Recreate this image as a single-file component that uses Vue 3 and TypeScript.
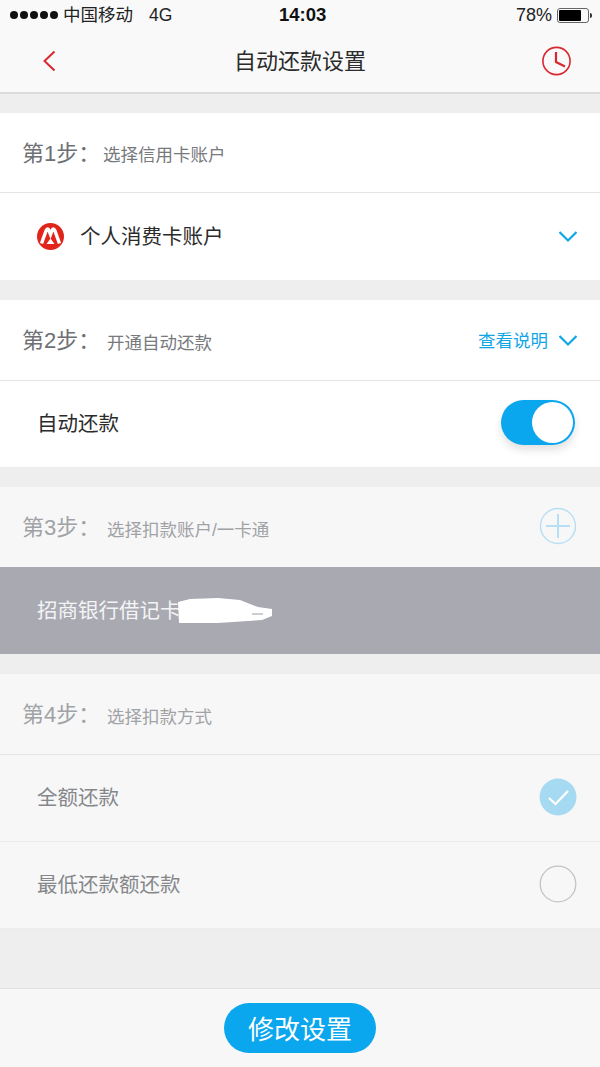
<template>
  <div class="page">
    <header class="top">
      <div class="status">
        <div class="status-left">
          <span class="dots"><i v-for="n in 5" :key="n"></i></span>
          <span class="carrier">中国移动</span>
          <span class="net">4G</span>
        </div>
        <span class="clock">14:03</span>
        <div class="status-right">
          <span class="pct">78%</span>
          <span class="battery"><b></b></span>
          <span class="nub"></span>
        </div>
      </div>
      <div class="nav">
        <svg class="nav-back" width="14" height="22" viewBox="0 0 14 22">
          <path d="M11.5 1.5 L1.5 11 L11.5 20.5" fill="none" stroke="#d9282f" stroke-width="2" />
        </svg>
        <h1>自动还款设置</h1>
        <svg class="nav-clock" width="30" height="30" viewBox="0 0 30 30">
          <circle cx="15.5" cy="15" r="13.6" fill="none" stroke="#d9282f" stroke-width="1.6" />
          <path d="M15 6 V16 L24 20.5" fill="none" stroke="#d9282f" stroke-width="2.2" />
        </svg>
      </div>
    </header>

    <section class="card">
      <div class="step">
        <span class="step-no">第1步：</span>
        <span class="step-text first">选择信用卡账户</span>
      </div>
      <div class="row account">
        <svg class="logo" width="27" height="27" viewBox="0 0 27 27">
          <circle cx="13.5" cy="13.5" r="13.5" fill="#e1251b" />
          <path d="M4.5 20.5 L9.2 7.5 Q10.5 4.5 12 7.5 L13.5 11.5 L15 7.5 Q16.5 4.5 17.8 7.5 L22.5 20.5" fill="none" stroke="#fff" stroke-width="3.4" />
          <path d="M9.5 21 L13.5 15.5 L17.5 21 Z" fill="#fff" />
        </svg>
        <span class="label dark">个人消费卡账户</span>
        <svg class="chev" width="20" height="13" viewBox="0 0 20 13">
          <path d="M1.5 2 L10 10.5 L18.5 2" fill="none" stroke="#12a5e6" stroke-width="2.2" />
        </svg>
      </div>
    </section>

    <section class="card wide-head">
      <div class="step">
        <span class="step-no">第2步：</span>
        <span class="step-text">开通自动还款</span>
        <span class="more">查看说明</span>
        <svg class="chev" width="20" height="13" viewBox="0 0 20 13">
          <path d="M1.5 2 L10 10.5 L18.5 2" fill="none" stroke="#12a5e6" stroke-width="2.2" />
        </svg>
      </div>
      <div class="row">
        <span class="label dark">自动还款</span>
        <span class="switch"><i></i></span>
      </div>
    </section>

    <section class="card off">
      <div class="step no-line">
        <span class="step-no">第3步：</span>
        <span class="step-text">选择扣款账户/一卡通</span>
        <svg class="plus" width="38" height="38" viewBox="0 0 38 38">
          <circle cx="19" cy="19" r="17.5" fill="none" stroke="#b5dff2" stroke-width="1.4" />
          <path d="M7 19 H31 M19 7 V31" fill="none" stroke="#b5dff2" stroke-width="2" />
        </svg>
      </div>
      <div class="bank">
        <span>招商银行借记卡</span>
        <svg class="scribble" width="96" height="30" viewBox="0 0 96 30">
          <path d="M0 6 L12 3 L40 2 L62 4 L72 8 L80 11 L94 13 L94 20 L84 24 L70 25 L40 27 L1 27 Z" fill="#fff" />
          <path d="M74 18 H85" fill="none" stroke="#b8b9c0" stroke-width="1.4" />
        </svg>
      </div>
    </section>

    <section class="card off last">
      <div class="step">
        <span class="step-no">第4步：</span>
        <span class="step-text">选择扣款方式</span>
      </div>
      <div v-for="item in payModes" :key="item.name" class="row">
        <span class="label">{{ item.name }}</span>
        <svg v-if="item.checked" class="radio" width="38" height="38" viewBox="0 0 38 38">
          <circle cx="19" cy="19" r="18.5" fill="#a6daf3" />
          <path d="M10 20 L16.5 26 L29 13" fill="none" stroke="#fff" stroke-width="2.2" />
        </svg>
        <svg v-else class="radio" width="38" height="38" viewBox="0 0 38 38">
          <circle cx="19" cy="19" r="17.8" fill="none" stroke="#c4c4c4" stroke-width="1.3" />
        </svg>
      </div>
    </section>

    <footer class="foot">
      <button class="save">修改设置</button>
    </footer>
  </div>
</template>

<script setup lang="ts">
const payModes = [
  { name: '全额还款', checked: true },
  { name: '最低还款额还款', checked: false }
]
</script>

<style>
html, body {
  margin: 0;
  background: #eeeeee;
}
</style>

<style scoped>
.page {
  width: 600px;
  height: 1067px;
  overflow: hidden;
  display: flex;
  flex-direction: column;
  background: #eeeeee;
  font-family: "Liberation Sans", "Noto Sans CJK SC", sans-serif;
}
.top {
  height: 94px;
  box-sizing: border-box;
  background: #f9f9f9;
  border-bottom: 2px solid #dcdcdc;
}
.status {
  height: 30px;
  display: flex;
  align-items: center;
  justify-content: space-between;
  padding: 0 8px 0 10px;
  position: relative;
  color: #222;
  font-size: 17.5px;
}
.status-left, .status-right {
  display: flex;
  align-items: center;
}
.dots {
  display: flex;
  gap: 2px;
  margin-right: 5px;
}
.dots i {
  width: 8px;
  height: 8px;
  border-radius: 50%;
  background: #111;
}
.carrier {
  margin-bottom: 3px;
}
.net {
  margin-left: 16px;
}
.clock {
  position: absolute;
  left: 279px;
  font-weight: 700;
  font-size: 18.5px;
  color: #111;
}
.pct {
  font-size: 18px;
  margin-right: 5px;
}
.battery {
  width: 32px;
  height: 15px;
  box-sizing: border-box;
  border: 1px solid #666;
  border-radius: 3px;
  padding: 1px;
  display: flex;
}
.battery b {
  width: 78%;
  background: #000;
  border-radius: 1px;
}
.nub {
  width: 2px;
  height: 5px;
  margin-left: 1px;
  background: #333;
  border-radius: 0 2px 2px 0;
}
.nav {
  height: 62px;
  box-sizing: border-box;
  padding-bottom: 4px;
  display: flex;
  align-items: center;
  justify-content: center;
  position: relative;
}
.nav h1 {
  margin: 0;
  font-size: 22px;
  font-weight: 400;
  color: #2b2b2b;
}
.nav-back {
  position: absolute;
  left: 43px;
  top: 20px;
}
.nav-clock {
  position: absolute;
  left: 541px;
  top: 16px;
}
.card {
  margin-top: 20px;
  background: #fff;
}
.card:first-of-type {
  margin-top: 19px;
}
.step {
  height: 80px;
  box-sizing: border-box;
  display: flex;
  align-items: center;
  padding: 0 22px 4px 22px;
  border-bottom: 1px solid #e4e4e4;
}
.step.no-line {
  border-bottom: 0;
}
.wide-head .step, .last .step {
  height: 81px;
}
.wide-head .row {
  height: 86px;
}
.step-no {
  font-size: 22px;
  color: #6e7074;
  width: 85px;
}
.step-text {
  font-size: 17.5px;
  color: #77797d;
  margin-top: 6px;
  flex: 1;
}
.step-text.first {
  margin-left: -4px;
}
.more {
  font-size: 17.5px;
  color: #12a5e6;
  margin: 2px 10px 0 0;
}
.step .chev {
  margin-top: 4px;
}
.row {
  height: 87px;
  box-sizing: border-box;
  display: flex;
  align-items: center;
  padding: 0 22px 0 37px;
  border-bottom: 1px solid #ececec;
}
.card:not(.off) .row {
  border-bottom: 0;
}
.logo {
  margin-right: 16px;
}
.label {
  flex: 1;
  font-size: 20.5px;
  color: #77797d;
  margin-bottom: 4px;
}
.label.dark {
  color: #2b2b2b;
}
.radio {
  margin: 0 1px 2px 0;
}
.switch {
  width: 74px;
  height: 45px;
  margin: 0 3px 4px 0;
  box-sizing: border-box;
  padding: 2px;
  border-radius: 23px;
  background: #0aa6ee;
  display: flex;
  justify-content: flex-end;
  box-shadow: 0 5px 8px rgba(0, 0, 0, 0.12);
}
.switch i {
  width: 41px;
  height: 41px;
  border-radius: 50%;
  background: #fff;
}
.off {
  background: #f7f7f7;
}
.off .step-no {
  color: #a0a2a6;
}
.off .step-text {
  color: #a0a2a6;
}
.off .label {
  color: #85878b;
}
.plus {
  margin: 2px 1px 0 0;
}
.bank {
  height: 87px;
  display: flex;
  align-items: center;
  padding-left: 37px;
  background: #a8a9b1;
  color: #f4f4f6;
  font-size: 20.5px;
  position: relative;
}
.bank span {
  margin-bottom: 3px;
}
.scribble {
  position: absolute;
  left: 178px;
  top: 29px;
}
.foot {
  margin-top: auto;
  height: 79px;
  box-sizing: border-box;
  border-top: 1px solid #e2e2e2;
  background: #f7f7f7;
  display: flex;
  align-items: center;
  justify-content: center;
}
.save {
  width: 152px;
  height: 50px;
  margin-bottom: 1px;
  border: 0;
  border-radius: 25px;
  background: #0aa6ee;
  color: #fff;
  font-family: inherit;
  font-size: 26px;
}
</style>
